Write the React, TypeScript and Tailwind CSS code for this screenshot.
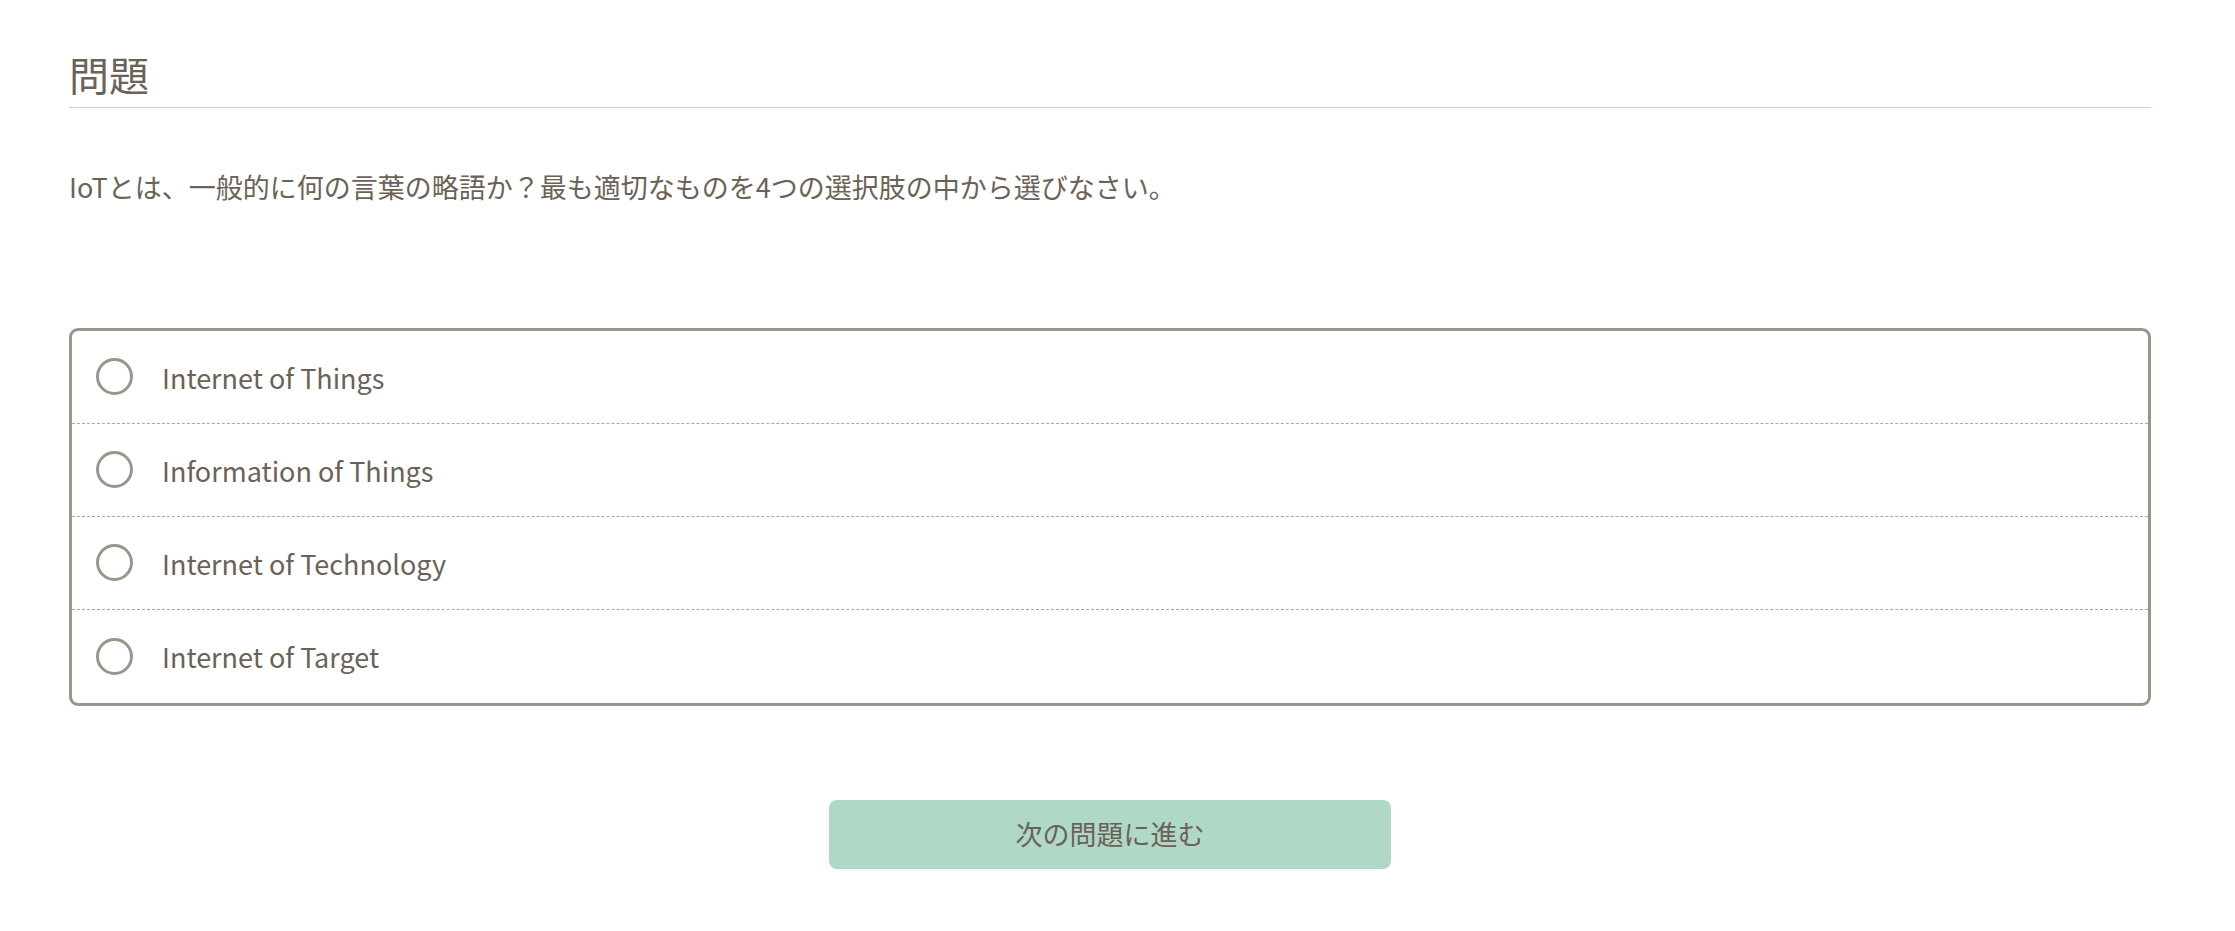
import { useState } from 'react'

const choices = ['Internet of Things', 'Information of Things', 'Internet of Technology', 'Internet of Target']

const Choice = ({ label, checked, onSelect, last }: { label: string; checked: boolean; onSelect: () => void; last: boolean }) => (
  <label
    className={
      'flex items-center h-[93px] pb-[1px] pl-[24px] cursor-pointer ' + (last ? '' : 'border-b border-dashed border-[#a9a9a9]')
    }
    onClick={onSelect}
  >
    <span className="flex items-center justify-center w-[37px] h-[37px] rounded-full border-[3px] border-[#9a968b] shrink-0">
      {checked && <span className="w-[19px] h-[19px] rounded-full bg-[#9a968b]" />}
    </span>
    <span className="ml-[29px] text-[27px] leading-[40px] translate-y-[1px]">{label}</span>
  </label>
)

const App = () => {
  const [selected, setSelected] = useState<number | null>(null)

  return (
    <div
      className="min-h-screen bg-white text-[#6b6257] pl-[69px] pr-[84px] pt-[46px]"
      style={{ fontFamily: '"Noto Sans CJK JP", "Noto Sans", sans-serif' }}
    >
      <h2 className="text-[40px] leading-[56px] font-normal pb-[5px] border-b border-[#c6d8d3]">問題</h2>

      <p className="mt-[59px] text-[27px] leading-[40px]">
        IoTとは、一般的に何の言葉の略語か？最も適切なものを4つの選択肢の中から選びなさい。
      </p>

      <div className="mt-[121px] border-[3px] border-[#99958a] rounded-[9px] overflow-hidden">
        {choices.map((c, i) => (
          <Choice key={c} label={c} checked={selected === i} onSelect={() => setSelected(i)} last={i === choices.length - 1} />
        ))}
      </div>

      <div className="flex justify-center mt-[94px]">
        <button className="w-[562px] h-[69px] rounded-[8px] bg-[#b0d8c7] text-[27px] text-[#6b6257]">次の問題に進む</button>
      </div>
    </div>
  )
}

export default App
